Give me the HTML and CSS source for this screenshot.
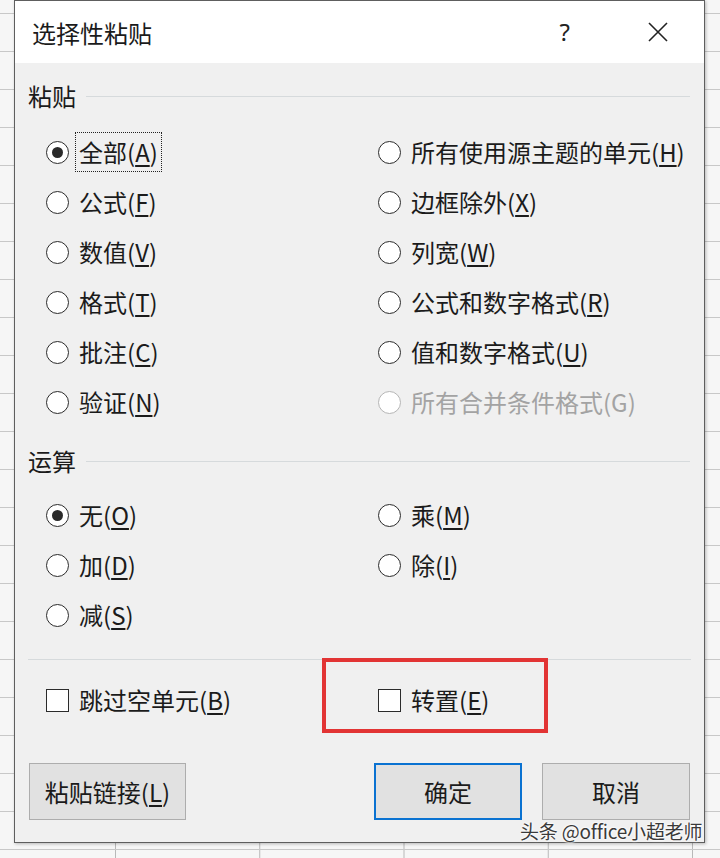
FILE: index.html
```html
<!DOCTYPE html>
<html lang="zh-CN">
<head>
<meta charset="utf-8">
<title>选择性粘贴</title>
<link rel="stylesheet" href="styles.css">
</head>
<body>
<div class="dialog">
  <div class="titlebar">
    <span class="title">选择性粘贴</span>
    <span class="help">?</span>
    <span class="close">
      <svg width="22" height="22" viewBox="0 0 22 22"><path d="M2 2 L20 20 M20 2 L2 20" stroke="#222" stroke-width="1.6" fill="none"/></svg>
    </span>
  </div>
  <div class="body">
    <div class="group-head"><span class="group-label">粘贴</span><span class="group-line"></span></div>
    <div class="options six">
      <div class="opt"><span class="radio checked"></span><span class="lbl focus">全部(<u>A</u>)</span></div>
      <div class="opt"><span class="radio"></span><span class="lbl">所有使用源主题的单元(<u>H</u>)</span></div>
      <div class="opt"><span class="radio"></span><span class="lbl">公式(<u>F</u>)</span></div>
      <div class="opt"><span class="radio"></span><span class="lbl">边框除外(<u>X</u>)</span></div>
      <div class="opt"><span class="radio"></span><span class="lbl">数值(<u>V</u>)</span></div>
      <div class="opt"><span class="radio"></span><span class="lbl">列宽(<u>W</u>)</span></div>
      <div class="opt"><span class="radio"></span><span class="lbl">格式(<u>T</u>)</span></div>
      <div class="opt"><span class="radio"></span><span class="lbl">公式和数字格式(<u>R</u>)</span></div>
      <div class="opt"><span class="radio"></span><span class="lbl">批注(<u>C</u>)</span></div>
      <div class="opt"><span class="radio"></span><span class="lbl">值和数字格式(<u>U</u>)</span></div>
      <div class="opt"><span class="radio"></span><span class="lbl">验证(<u>N</u>)</span></div>
      <div class="opt disabled"><span class="radio"></span><span class="lbl">所有合并条件格式(G)</span></div>
    </div>
    <div class="group-head second"><span class="group-label">运算</span><span class="group-line"></span></div>
    <div class="options three">
      <div class="opt"><span class="radio checked"></span><span class="lbl">无(<u>O</u>)</span></div>
      <div class="opt"><span class="radio"></span><span class="lbl">乘(<u>M</u>)</span></div>
      <div class="opt"><span class="radio"></span><span class="lbl">加(<u>D</u>)</span></div>
      <div class="opt"><span class="radio"></span><span class="lbl">除(<u>I</u>)</span></div>
      <div class="opt"><span class="radio"></span><span class="lbl">减(<u>S</u>)</span></div>
    </div>
    <div class="separator"></div>
    <div class="options checks">
      <div class="opt"><span class="check"></span><span class="lbl">跳过空单元(<u>B</u>)</span></div>
      <div class="opt"><span class="check"></span><span class="lbl">转置(<u>E</u>)</span></div>
    </div>
    <div class="buttons">
      <button class="btn link">粘贴链接(<u>L</u>)</button>
      <button class="btn ok">确定</button>
      <button class="btn cancel">取消</button>
    </div>
  </div>
  <div class="highlight"></div>
</div>
<div class="watermark">头条 @office小超老师</div>
</body>
</html>
```

FILE: styles.css
```css
html, body {
  margin: 0;
  padding: 0;
}
body {
  width: 720px;
  height: 858px;
  overflow: hidden;
  position: relative;
  font-family: "Noto Sans CJK SC", "Noto Sans", sans-serif;
  color: #1b1b1b;
  background-color: #f6f6f6;
  background-image:
    linear-gradient(#c8c8c8 1px, transparent 1px),
    linear-gradient(90deg, #b8b8b8 1px, transparent 1px);
  background-size: 144px 38px, 144.25px 38px;
  background-position: 0 13px, 115px 0;
}
.dialog {
  position: relative;
  margin-left: 14px;
  width: 689px;
  height: 841px;
  border: 1px solid #5e5e5e;
  background: #f0f0f0;
  box-shadow: 1px 1px 3px rgba(0,0,0,0.25);
  display: flex;
  flex-direction: column;
}
.titlebar {
  height: 62px;
  background: #fff;
  display: flex;
  align-items: center;
  padding-left: 17px;
  flex: none;
}
.title {
  font-size: 24px;
  line-height: 30px;
  margin-top: 1px;
}
.help {
  margin-left: auto;
  font-family: "Noto Sans", sans-serif;
  font-size: 24px;
  line-height: 30px;
  margin-right: 77px;
  color: #222;
}
.close {
  display: flex;
  margin-right: 35px;
}
.body {
  flex: 1;
  padding: 18px 0 0 0;
  display: flex;
  flex-direction: column;
}
.group-head {
  display: flex;
  align-items: center;
  height: 30px;
  padding: 0 14px 0 13px;
}
.group-head.second {
  margin-top: 19px;
}
.group-label {
  font-size: 24px;
  line-height: 30px;
}
.group-line {
  flex: 1;
  height: 1px;
  background: #d6dadc;
  margin-left: 10px;
}
.options {
  display: grid;
  grid-template-columns: 332px 1fr;
  grid-auto-rows: 50px;
  padding-left: 31px;
}
.options.six {
  margin-top: 16px;
}
.options.three {
  margin-top: 14px;
}
.options.checks {
  margin-top: 15px;
}
.opt {
  display: flex;
  align-items: center;
}
.radio {
  width: 21px;
  height: 21px;
  border: 1.7px solid #2b2b2b;
  border-radius: 50%;
  background: #fff;
  flex: none;
  display: flex;
  align-items: center;
  justify-content: center;
}
.radio.checked::after {
  content: "";
  width: 11px;
  height: 11px;
  border-radius: 50%;
  background: #2a2a2a;
}
.check {
  width: 21px;
  height: 21px;
  border: 1.7px solid #2b2b2b;
  background: #fff;
  flex: none;
}
.lbl {
  font-size: 24px;
  line-height: 30px;
  margin-left: 6px;
  padding: 4px 3px;
  border: 1px dotted transparent;
  white-space: nowrap;
}
.lbl u {
  text-decoration-thickness: 1.5px;
  text-underline-offset: 3px;
}
.lbl.focus {
  border-color: #222;
}
.disabled .radio {
  border-color: #b5b5b5;
}
.disabled .lbl {
  color: #a3a3a3;
}
.separator {
  height: 1px;
  background: #d6dadc;
  margin: 19px 13px 0 13px;
}
.buttons {
  display: flex;
  margin-top: 38px;
  padding: 0 14px 0 14px;
}
.btn {
  font-family: "Noto Sans CJK SC", sans-serif;
  font-size: 24px;
  color: #1b1b1b;
  height: 57px;
  background: #e1e1e1;
  border: 1px solid #adadad;
  padding: 0;
  margin: 0;
}
.btn u {
  text-decoration-thickness: 1.5px;
  text-underline-offset: 3px;
}
.btn.link {
  width: 157px;
}
.btn.ok {
  width: 148px;
  margin-left: auto;
  border: 2px solid #0a72d1;
}
.btn.cancel {
  width: 148px;
  margin-left: 20px;
}
.highlight {
  position: absolute;
  left: 307px;
  top: 657px;
  width: 218px;
  height: 67px;
  border: 4px solid #e23434;
}
.watermark {
  position: absolute;
  left: 520px;
  top: 818px;
  font-family: "Noto Sans CJK SC", sans-serif;
  font-size: 19px;
  line-height: 26px;
  color: #3a3a3a;
  text-shadow: 0 0 2px #fff, 0 0 2px #fff, 0 0 3px #fff;
  letter-spacing: -0.2px;
}
```
